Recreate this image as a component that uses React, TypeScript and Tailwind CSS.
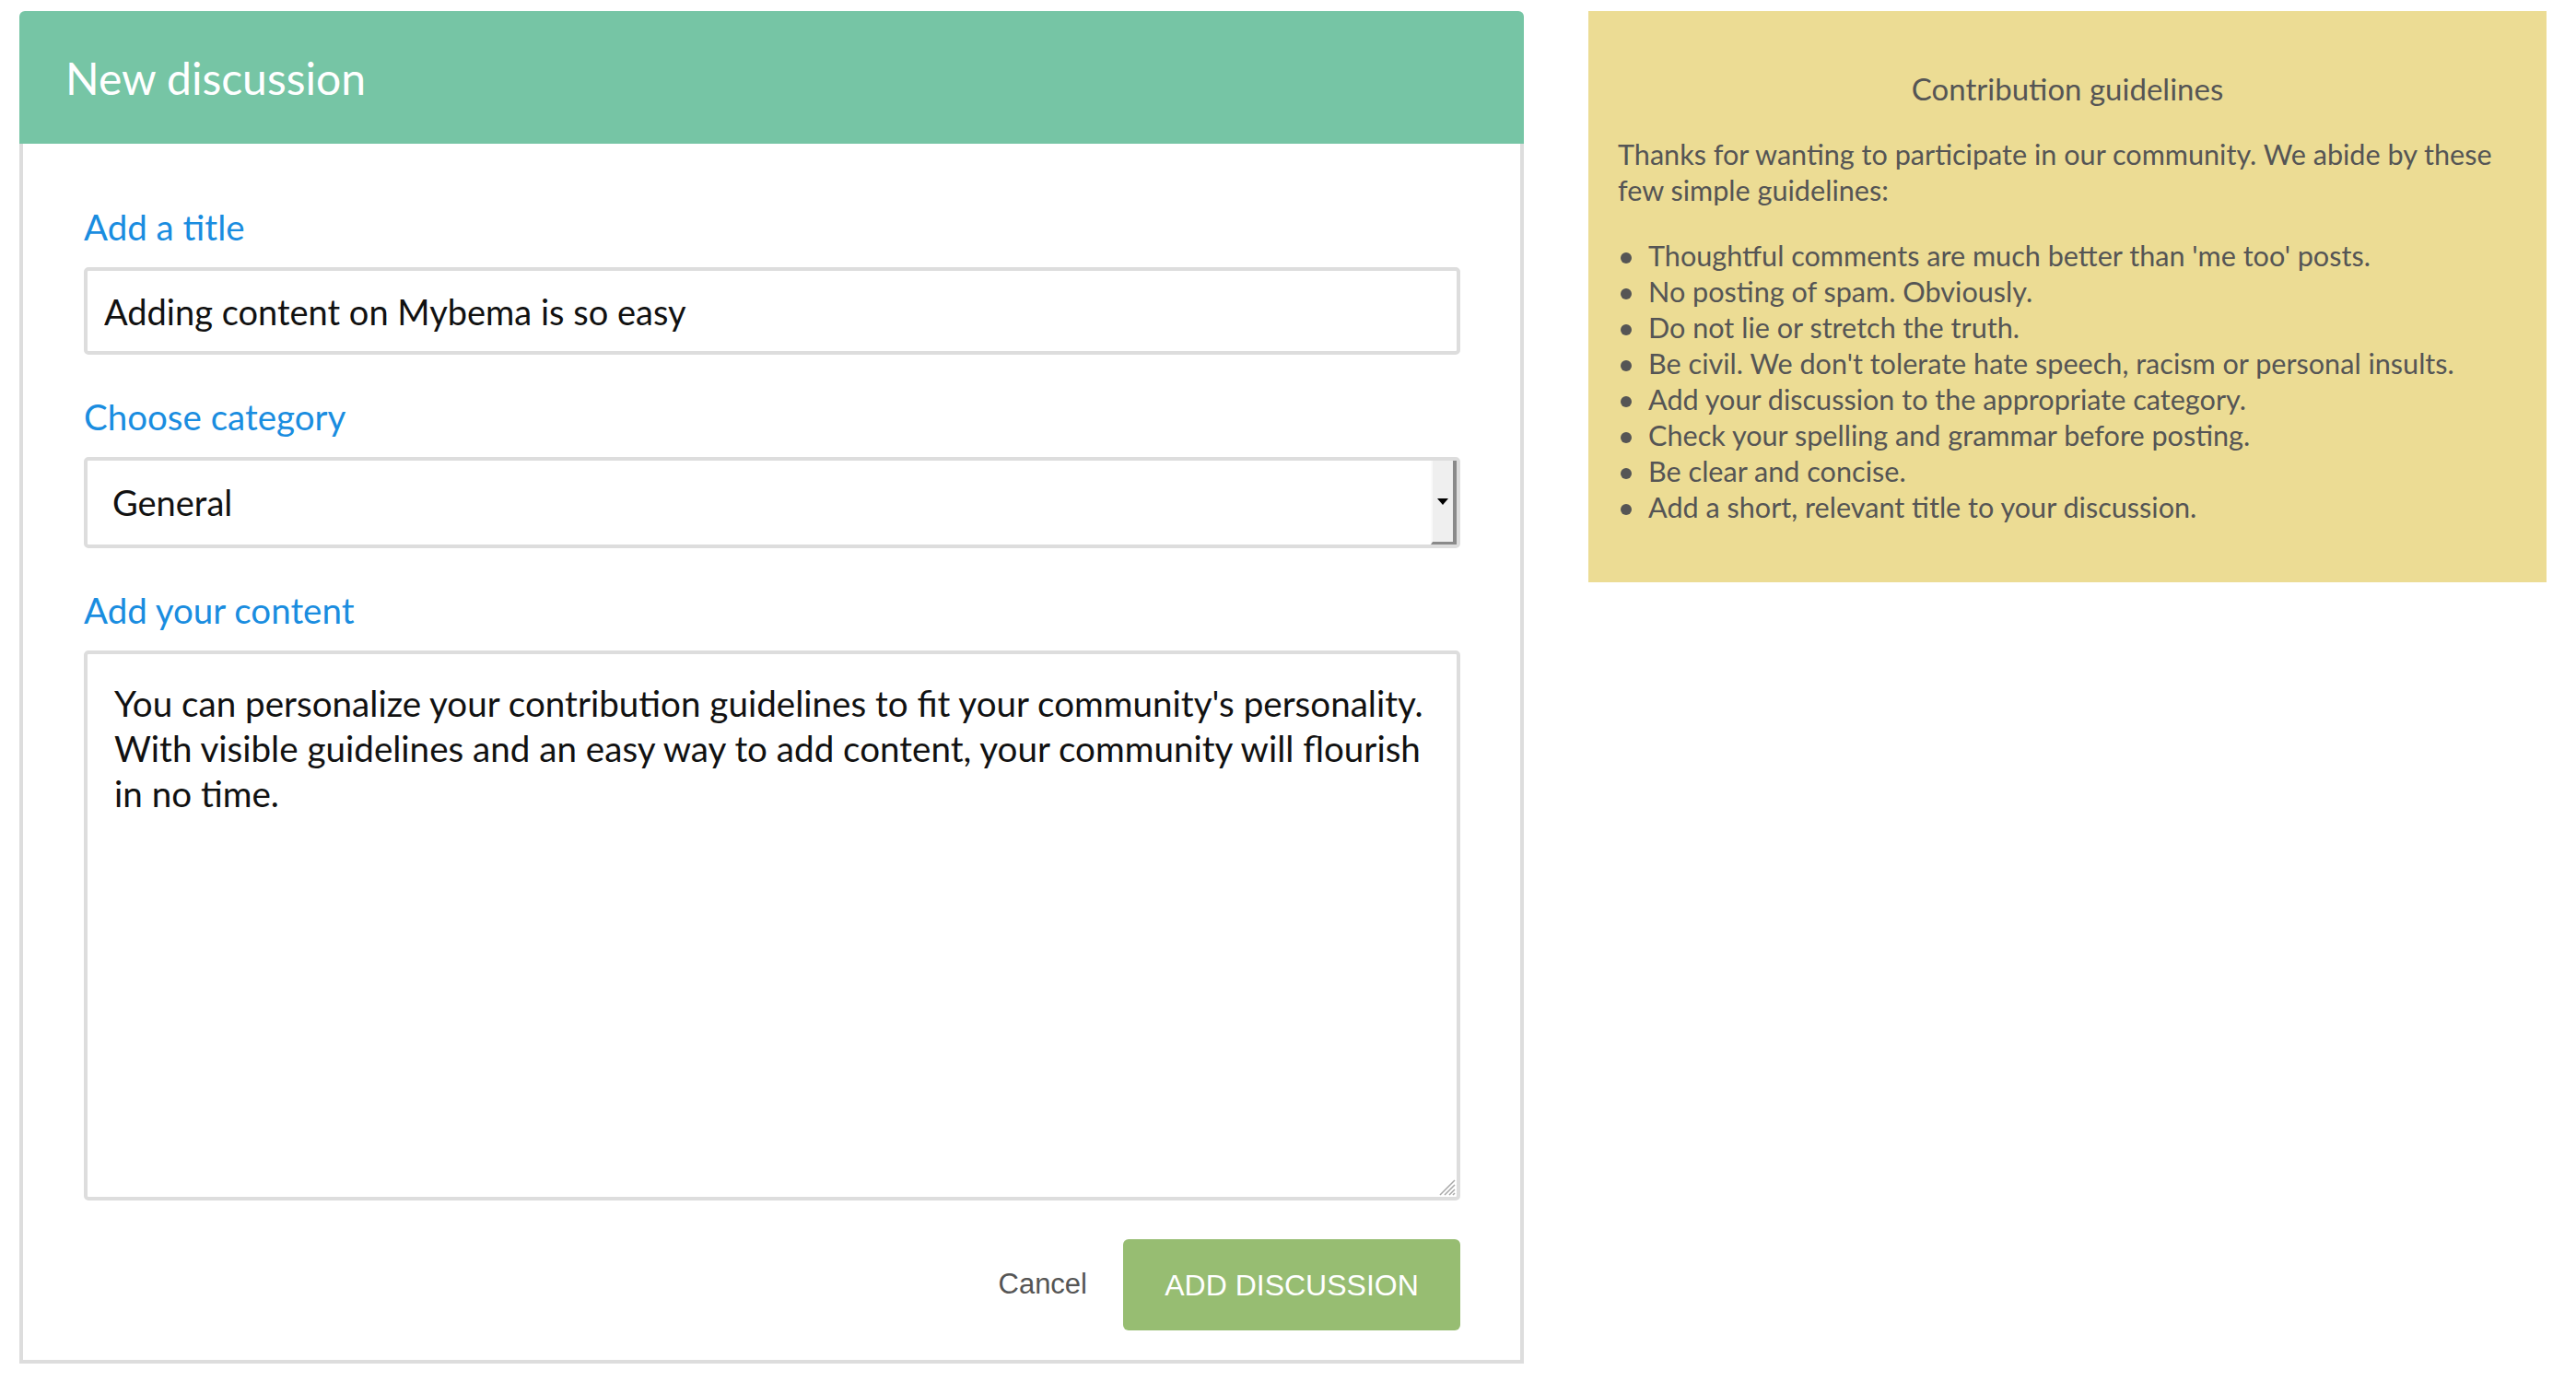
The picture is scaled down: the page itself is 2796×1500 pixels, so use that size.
import React from 'react'

const guidelines = [
  "Thoughtful comments are much better than 'me too' posts.",
  'No posting of spam. Obviously.',
  'Do not lie or stretch the truth.',
  "Be civil. We don't tolerate hate speech, racism or personal insults.",
  'Add your discussion to the appropriate category.',
  'Check your spelling and grammar before posting.',
  'Be clear and concise.',
  'Add a short, relevant title to your discussion.',
]

const content =
  "You can personalize your contribution guidelines to fit your community's personality. With visible guidelines and an easy way to add content, your community will flourish in no time."

const FieldLabel: React.FC<{ children: React.ReactNode }> = ({ children }) => (
  <label className="block pt-[2px] text-[38.5px] leading-[46px] text-[#1a8de0] mb-[21px]">{children}</label>
)

const App: React.FC = () => {
  return (
    <div className="min-h-screen bg-white font-['Lato',sans-serif] flex items-start gap-[70px] pl-[21px] pt-[12px]">
      {/* New discussion form */}
      <div className="w-[1633px]">
        <div className="h-[144px] bg-[#76c5a5] rounded-t-[6px] flex items-center pl-[50px] pt-[2px] text-white text-[48px]">
          New discussion
        </div>
        <div className="border-x-4 border-b-4 border-[#dddddd] pt-[65px] pl-[66px] pr-[65px] pb-[32px]">
          <FieldLabel>Add a title</FieldLabel>
          <input
            type="text"
            defaultValue="Adding content on Mybema is so easy"
            className="block w-full h-[95px] border-4 border-[#dddddd] rounded-[5px] pl-[18px] text-[38px] text-[#111111] outline-none"
          />

          <div className="mt-[42px]">
            <FieldLabel>Choose category</FieldLabel>
            <div className="flex h-[99px] border-4 border-[#dddddd] rounded-[5px]">
              <div className="flex-1 flex items-center pl-[27px] text-[38px] text-[#111111]">General</div>
              <div className="w-[28px] bg-[#efefef] border-l-2 border-l-[#fafafa] border-r-[4px] border-b-[3px] border-r-[#8a8a8a] border-b-[#8a8a8a] flex items-center justify-center">
                <div className="w-0 h-0 border-l-[6px] border-r-[6px] border-t-[7px] border-l-transparent border-r-transparent border-t-black" />
              </div>
            </div>
          </div>

          <div className="mt-[42px]">
            <FieldLabel>Add your content</FieldLabel>
            <div className="relative">
              <textarea
                defaultValue={content}
                className="block w-full h-[597px] border-4 border-[#dddddd] rounded-[5px] pl-[29px] pr-[22px] pt-[29px] text-[38.6px] leading-[49px] text-[#111111] outline-none resize-none"
              />
              {/* resize grip */}
              <svg className="absolute right-[5px] bottom-[5px] pointer-events-none" width="20" height="20" viewBox="0 0 20 20">
                <path d="M19 3 L3 19 M19 8 L8 19 M19 13 L13 19 M19 17 L17 19" stroke="#a8a8a8" strokeWidth="1.5" />
              </svg>
            </div>
          </div>

          <div className="mt-[42px] flex justify-end items-center gap-[39px] font-['Liberation_Sans',Arial,sans-serif]">
            <a className="text-[31px] text-[#555555] cursor-pointer">Cancel</a>
            <button className="w-[366px] h-[99px] rounded-[6px] bg-[#97bd72] text-white text-[32px] flex items-center justify-center">
              ADD DISCUSSION
            </button>
          </div>
        </div>
      </div>

      {/* Guidelines */}
      <div className="w-[1040px] bg-[#ecdc94] pt-[65px] pb-[62px] px-[32px] text-[#555555]">
        <h2 className="text-center text-[33px] leading-[39px] mb-[32px]">Contribution guidelines</h2>
        <p className="text-[30.6px] leading-[39px] mb-[32px]">
          Thanks for wanting to participate in our community. We abide by these few simple guidelines:
        </p>
        <ul>
          {guidelines.map((g) => (
            <li key={g} className="flex items-start text-[30.6px] leading-[39px]">
              <span className="mt-[16px] ml-[3px] mr-[18px] w-[12px] h-[12px] rounded-full bg-[#555555] shrink-0" />
              {g}
            </li>
          ))}
        </ul>
      </div>
    </div>
  )
}

export default App
